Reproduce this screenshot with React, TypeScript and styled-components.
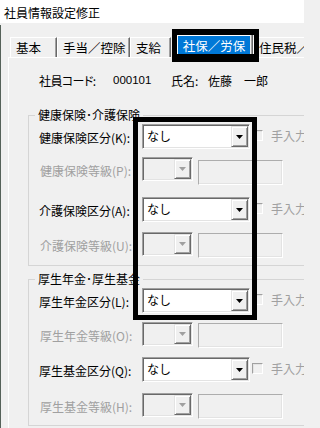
import React from "react";
import styled, { createGlobalStyle } from "styled-components";

const GlobalStyle = createGlobalStyle`
  html, body { margin: 0; padding: 0; background: #f0f0f0; overflow: hidden; }
  body {
    font-family: "Noto Sans CJK JP", "Noto Sans", sans-serif;
    font-size: 12px;
    color: #000;
  }
  * { box-sizing: border-box; }
`;

const Window = styled.div`
  width: 304px;
  height: 428px;
  overflow: hidden;
  background: #f0f0f0;
  display: flex;
  flex-direction: column;
`;

const TitleBar = styled.div`
  flex: none;
  height: 23px;
  background: #fff;
  display: flex;
  align-items: center;
  padding: 2px 0 0 4px;
  font-size: 12px;
  line-height: 1;
  white-space: nowrap;
`;

const Body = styled.div`
  flex: 1;
  display: flex;
  min-height: 0;
`;

const DesktopEdge = styled.div`
  flex: none;
  width: 1px;
  margin-top: 2px;
  background: #56625a;
`;

const Content = styled.div`
  flex: 1;
  min-width: 0;
  display: flex;
  flex-direction: column;
  padding: 12px 0 0 7px;
`;

const TabRow = styled.div`
  flex: none;
  height: 22px;
  display: flex;
  align-items: flex-end;
  padding-left: 2px;
  position: relative;
  z-index: 1;
`;

const Tab = styled.div<{ $w: number }>`
  flex: none;
  width: ${(p) => p.$w}px;
  height: 20px;
  border-top: 1px solid #fff;
  border-left: 1px solid #fff;
  border-right: 1px solid #696969;
  box-shadow: inset -1px 0 #a0a0a0;
  padding-left: 5px;
  display: flex;
  align-items: center;
  font-size: 12.5px;
  white-space: nowrap;
  overflow: hidden;
`;

const ActiveTab = styled.div`
  position: relative;
  flex: none;
  width: 82px;
  height: 23px;
  margin-bottom: -1px;
  background: #f0f0f0;
  border-right: 1px solid #696969;
  box-shadow: inset -1px 0 #a0a0a0;
  padding-left: 6px;
`;

const ActiveLabel = styled.div`
  width: 73px;
  height: 19px;
  background: #0078d7;
  color: #fff;
  border-top: 1px solid #fff;
  border-left: 1px solid #fff;
  display: flex;
  align-items: center;
  justify-content: center;
  font-size: 12.5px;
  white-space: nowrap;
`;

const TabCallout = styled.div`
  position: absolute;
  left: 1px;
  top: -6px;
  width: 87px;
  height: 33px;
  border-style: solid;
  border-color: #000;
  border-width: 6px 5px 8px 5px;
  pointer-events: none;
`;

const Panel = styled.div`
  position: relative;
  flex: 1;
  border-top: 1px solid #fff;
  border-left: 1px solid #fff;
  display: flex;
  flex-direction: column;
  align-items: flex-start;
`;

const EmployeeRow = styled.div`
  flex: none;
  margin-top: 12px;
  height: 20px;
  padding-left: 30px;
  display: flex;
  align-items: center;
  white-space: nowrap;
`;

const Cell = styled.span<{ $w?: number; $mono?: boolean; $tight?: boolean }>`
  flex: none;
  width: ${(p) => (p.$w ? `${p.$w}px` : "auto")};
  font-family: ${(p) =>
    p.$mono ? `"Liberation Sans", Arial, sans-serif` : `"Noto Sans CJK JP", sans-serif`};
  font-size: ${(p) => (p.$mono ? "11.5px" : "12px")};
  font-feature-settings: ${(p) => (p.$tight ? `"palt"` : "normal")};
  letter-spacing: ${(p) => (p.$tight ? "-0.6px" : "0")};
`;

const Group = styled.fieldset<{ $mt: number }>`
  flex: none;
  margin: ${(p) => p.$mt}px 0 0 19px;
  width: 320px;
  min-inline-size: 0;
  border: 1px solid #d5d5d5;
  padding: 1px 0 6px 6px;
`;

const GroupTitle = styled.legend`
  padding: 0 3px;
  font-size: 12px;
  line-height: 16px;
  white-space: nowrap;
`;

const Row = styled.div<{ $h: number }>`
  display: flex;
  align-items: flex-start;
  height: ${(p) => p.$h}px;
`;

const FieldLabel = styled.div<{ $disabled?: boolean }>`
  flex: none;
  width: 107px;
  height: 25px;
  display: flex;
  align-items: center;
  padding-top: 2px;
  padding-left: ${(p) => (p.$disabled ? 5 : 4)}px;
  color: ${(p) => (p.$disabled ? "#a0a0a0" : "#000")};
  font-size: 12px;
  white-space: nowrap;
`;

const Combo = styled.div<{ $w: number; $h: number; $disabled?: boolean }>`
  flex: none;
  width: ${(p) => p.$w}px;
  height: ${(p) => p.$h}px;
  display: flex;
  border: 1px solid;
  border-color: #a0a0a0 #fff #fff #a0a0a0;
  box-shadow: inset 1px 1px #696969, inset -1px -1px #e3e3e3;
  padding: 1px;
  background: ${(p) => (p.$disabled ? "#f0f0f0" : "#fff")};
`;

const ComboText = styled.div`
  flex: 1;
  padding: 0 0 0 3px;
  font-size: 12px;
  line-height: 19px;
  white-space: nowrap;
`;

const ComboButton = styled.div`
  flex: none;
  width: 17px;
  height: 100%;
  background: #f0f0f0;
  border: 1px solid;
  border-color: #e3e3e3 #696969 #696969 #e3e3e3;
  box-shadow: inset 1px 1px #fff, inset -1px -1px #a0a0a0;
  display: flex;
  align-items: center;
  justify-content: center;
`;

const TextBox = styled.div<{ $mt: number }>`
  flex: none;
  width: 85px;
  height: 25px;
  margin: ${(p) => p.$mt}px 0 0 5px;
  border: 1px solid;
  border-color: #adadad #fff #fff #adadad;
  box-shadow: inset -1px -1px #e3e3e3;
  background: #f0f0f0;
`;

const CheckBox = styled.div`
  flex: none;
  width: 11px;
  height: 11px;
  margin: 6px 0 0 2px;
  border: 1px solid;
  border-color: #a0a0a0 #fff #fff #a0a0a0;
  box-shadow: inset 1px 1px #e3e3e3;
  background: #f0f0f0;
`;

const CheckText = styled.div`
  flex: none;
  margin-left: 8px;
  height: 25px;
  line-height: 24px;
  color: #a0a0a0;
  font-size: 12px;
  white-space: nowrap;
`;

const Callout = styled.div`
  position: absolute;
  left: 124px;
  top: 59px;
  width: 124px;
  height: 203px;
  border: 5px solid #000;
  pointer-events: none;
`;

const Arrow = ({ disabled }: { disabled?: boolean }) => (
  <svg width="7" height="4" viewBox="0 0 7 4">
    <polygon points="0,0 7,0 3.5,4" fill={disabled ? "#a0a0a0" : "#000"} />
  </svg>
);

const KubunRow = ({ label, h }: { label: string; h: number }) => (
  <Row $h={h}>
    <FieldLabel>{label}</FieldLabel>
    <Combo $w={108} $h={25}>
      <ComboText>なし</ComboText>
      <ComboButton>
        <Arrow />
      </ComboButton>
    </Combo>
    <CheckBox />
    <CheckText>手入力</CheckText>
  </Row>
);

const GradeRow = ({ label, h, tm }: { label: string; h: number; tm: number }) => (
  <Row $h={h}>
    <FieldLabel $disabled>{label}</FieldLabel>
    <Combo $w={51} $h={24} $disabled>
      <ComboText />
      <ComboButton>
        <Arrow disabled />
      </ComboButton>
    </Combo>
    <TextBox $mt={tm} />
  </Row>
);

export default function App() {
  return (
    <>
      <GlobalStyle />
      <Window>
        <TitleBar>社員情報設定修正</TitleBar>
        <Body>
          <DesktopEdge />
          <Content>
            <TabRow>
              <Tab $w={47}>基本</Tab>
              <Tab $w={73}>手当／控除</Tab>
              <Tab $w={41}>支給</Tab>
              <ActiveTab>
                <ActiveLabel>社保／労保</ActiveLabel>
                <TabCallout />
              </ActiveTab>
              <Tab $w={90}>住民税／労保</Tab>
            </TabRow>
            <Panel>
              <EmployeeRow>
                <Cell $w={74} $tight>
                  社員コード:
                </Cell>
                <Cell $w={58} $mono>
                  000101
                </Cell>
                <Cell $w={37}>氏名:</Cell>
                <Cell>佐藤　一郎</Cell>
              </EmployeeRow>

              <Group $mt={17}>
                <GroupTitle>健康保険･介護保険</GroupTitle>
                <KubunRow label="健康保険区分(K):" h={33} />
                <GradeRow label="健康保険等級(P):" h={40} tm={3} />
                <KubunRow label="介護保険区分(A):" h={35} />
                <GradeRow label="介護保険等級(U):" h={27} tm={1} />
              </Group>

              <Group $mt={5}>
                <GroupTitle>厚生年金･厚生基金</GroupTitle>
                <KubunRow label="厚生年金区分(L):" h={34} />
                <GradeRow label="厚生年金等級(O):" h={35} tm={1} />
                <KubunRow label="厚生基金区分(Q):" h={36} />
                <GradeRow label="厚生基金等級(H):" h={26} tm={1} />
              </Group>

              <Callout />
            </Panel>
          </Content>
        </Body>
      </Window>
    </>
  );
}
